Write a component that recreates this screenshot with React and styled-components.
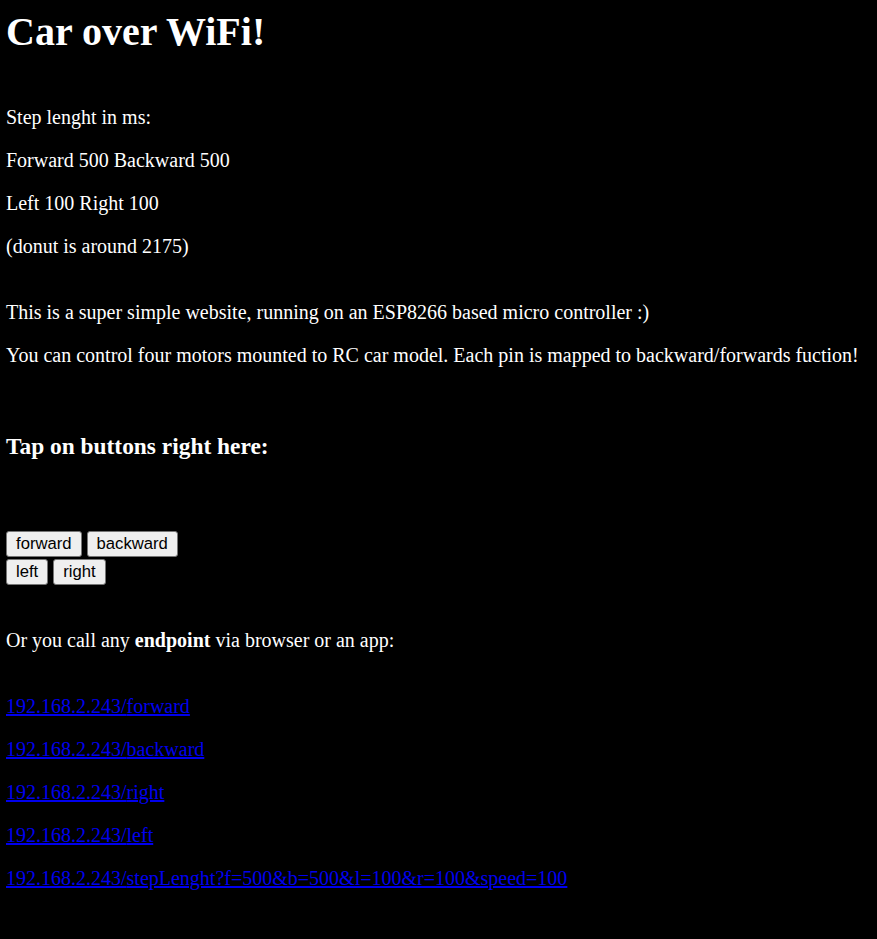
import styled, { createGlobalStyle } from 'styled-components';

const GlobalStyle = createGlobalStyle`
  html, body {
    margin: 0;
    background: #000;
  }
  body {
    font-family: "Liberation Serif", "Times New Roman", serif;
    color: #fff;
  }
`;

const Page = styled.main`
  padding: 0 6px 40px;
`;

const Title = styled.h1`
  margin: 10px 0 0;
  font-size: 40px;
  line-height: 44px;
  font-weight: bold;
`;

const Text = styled.p`
  margin: ${({ $top }) => ($top !== undefined ? $top : 20)}px 0 0;
  font-size: 20px;
  line-height: 23px;
`;

const SubTitle = styled.h3`
  margin: 66px 0 0;
  font-size: 23.4px;
  line-height: 26px;
  font-weight: bold;
`;

const Controls = styled.div`
  margin-top: 72px;
  display: flex;
  flex-direction: column;
  gap: 2.5px;
`;

const ButtonRow = styled.div`
  display: flex;
  gap: 5px;
`;

const Button = styled.button`
  height: 25.5px;
  padding: 0 9px;
  font-family: "Liberation Sans", Arial, sans-serif;
  font-size: 16.67px;
  color: #000;
  background: #efefef;
  border: 1px solid #767676;
  border-radius: 3px;
`;

const Link = styled.a`
  color: #0000ee;
  text-decoration: underline;
`;

const endpoints = [
  'forward',
  'backward',
  'right',
  'left',
  'stepLenght?f=500&b=500&l=100&r=100&speed=100',
];

const host = '192.168.2.243';

export default function App() {
  return (
    <>
      <GlobalStyle />
      <Page>
        <Title>Car over WiFi!</Title>

        <Text $top={52}>Step lenght in ms:</Text>
        <Text>Forward 500 Backward 500</Text>
        <Text>Left 100 Right 100</Text>
        <Text>(donut is around 2175)</Text>

        <Text $top={43}>
          This is a super simple website, running on an ESP8266 based micro controller :)
        </Text>
        <Text>
          You can control four motors mounted to RC car model. Each pin is mapped to
          backward/forwards fuction!
        </Text>

        <SubTitle>Tap on buttons right here:</SubTitle>

        <Controls>
          <ButtonRow>
            <Button>forward</Button>
            <Button>backward</Button>
          </ButtonRow>
          <ButtonRow>
            <Button>left</Button>
            <Button>right</Button>
          </ButtonRow>
        </Controls>

        <Text $top={44}>
          Or you call any <b>endpoint</b> via browser or an app:
        </Text>

        {endpoints.map((path, i) => (
          <Text key={path} $top={i === 0 ? 43 : 20}>
            <Link href={`http://${host}/${path}`}>
              {host}/{path}
            </Link>
          </Text>
        ))}
      </Page>
    </>
  );
}
